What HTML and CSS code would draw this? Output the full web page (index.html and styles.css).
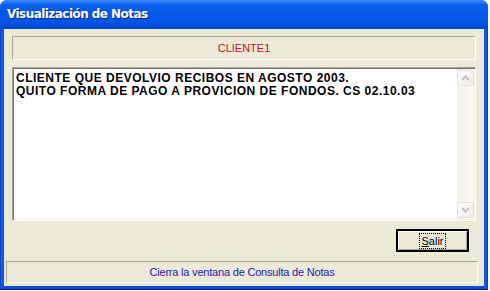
FILE: index.html
```html
<!DOCTYPE html>
<html lang="es">
<head>
<meta charset="utf-8">
<title>Visualización de Notas</title>
<link rel="stylesheet" href="styles.css">
</head>
<body>
<div class="window">
  <div class="titlebar">Visualización de Notas</div>
  <div class="client">
    <div class="panel">CLIENTE1</div>
    <div class="memo">
      <div class="memo-text">CLIENTE QUE DEVOLVIO RECIBOS EN AGOSTO 2003.<br>QUITO FORMA DE PAGO A PROVICION DE FONDOS. CS 02.10.03</div>
      <div class="scrollbar">
        <div class="sb-btn"><svg width="9" height="6" viewBox="0 0 9 6"><path d="M1 5 L4.5 1.5 L8 5" fill="none" stroke="#c4c2b6" stroke-width="2"/></svg></div>
        <div class="sb-track"></div>
        <div class="sb-btn"><svg width="9" height="6" viewBox="0 0 9 6"><path d="M1 1 L4.5 4.5 L8 1" fill="none" stroke="#c4c2b6" stroke-width="2"/></svg></div>
      </div>
    </div>
    <div class="button-row">
      <button class="btn"><span class="focus"><u>S</u>alir</span></button>
    </div>
    <div class="status">Cierra la ventana de Consulta de Notas</div>
  </div>
</div>
</body>
</html>
```

FILE: styles.css
```css
html, body {
  margin: 0;
  padding: 0;
  background: #ffffff;
}
.window {
  width: 488px;
  height: 290px;
  box-sizing: border-box;
  display: flex;
  flex-direction: column;
  border-radius: 7px 7px 0 0;
  background: linear-gradient(to right, #0a3fcf 0, #1a62ea 2px, #0a4fdc 4px, #0a4fdc 484px, #1c5fe6 486px, #0332b8 488px);
  box-shadow: inset 0 -1px 0 #00138c;
  font-family: "Liberation Sans", Tahoma, sans-serif;
}
.titlebar {
  height: 29px;
  box-sizing: border-box;
  padding: 7px 0 0 7px;
  border-radius: 7px 7px 0 0;
  background: linear-gradient(to bottom, #3d8cf8 0, #2a78f7 2px, #0a5ff0 5px, #0558e8 12px, #0456e6 20px, #0350dc 25px, #0247c8 29px);
  color: #ffffff;
  font-family: "DejaVu Sans", sans-serif;
  font-weight: bold;
  font-size: 12px;
  letter-spacing: -0.55px;
  text-shadow: 1px 1px 0 #0a2f8a;
}
.client {
  flex: 1;
  margin: 0 4px 4px 4px;
  background: #ece9d8;
  padding: 7px 8px 3px 8px;
  display: flex;
  flex-direction: column;
}
.panel {
  height: 24px;
  box-sizing: border-box;
  border-top: 1px solid #aca899;
  border-left: 1px solid #aca899;
  border-bottom: 1px solid #ffffff;
  border-right: 1px solid #ffffff;
  color: #c0101c;
  font-size: 11px;
  text-align: center;
  line-height: 22px;
}
.memo {
  margin-top: 7px;
  height: 154px;
  box-sizing: border-box;
  background: #ffffff;
  border-top: 1px solid #aca899;
  border-left: 1px solid #aca899;
  border-bottom: 1px solid #ffffff;
  border-right: 1px solid #ffffff;
  box-shadow: inset 1px 1px 0 #716f64, inset -1px -1px 0 #f1efe2;
  display: flex;
  padding: 1px;
}
.memo-text {
  flex: 1;
  padding: 3px 2px;
  font-weight: bold;
  font-size: 12px;
  line-height: 13px;
  color: #000000;
  letter-spacing: 0.5px;
}
.scrollbar {
  width: 17px;
  display: flex;
  flex-direction: column;
  background: linear-gradient(to right, #f3f1ea, #fbfbf8);
}
.sb-btn {
  height: 16px;
  box-sizing: border-box;
  margin: 1px 0;
  border: 1px solid #e3e1d8;
  border-radius: 2px;
  background: linear-gradient(to bottom right, #fbfbf9, #eeede6);
  display: flex;
  align-items: center;
  justify-content: center;
}
.sb-track {
  flex: 1;
}
.button-row {
  display: flex;
  justify-content: flex-end;
  margin-top: 8px;
  padding-right: 7px;
}
.btn {
  width: 73px;
  height: 23px;
  box-sizing: border-box;
  margin: 0;
  padding: 0;
  border: 2px solid #000000;
  background: #ece9d8;
  box-shadow: inset 1px 1px 0 #ffffff, inset -1px -1px 0 #aca899;
  font-family: "Liberation Sans", Tahoma, sans-serif;
  font-size: 11px;
  color: #000000;
  display: flex;
  align-items: center;
  justify-content: center;
}
.focus {
  border: 1px dotted #000000;
  padding: 1px 1px;
  line-height: 12px;
}
.status {
  margin: 9px -2px 0 -6px;
  height: 22px;
  box-sizing: border-box;
  border-top: 1px solid #aca899;
  border-left: 1px solid #aca899;
  border-bottom: 1px solid #ffffff;
  border-right: 1px solid #ffffff;
  color: #1a22a6;
  font-size: 11px;
  letter-spacing: -0.2px;
  text-align: center;
  line-height: 20px;
}
```
